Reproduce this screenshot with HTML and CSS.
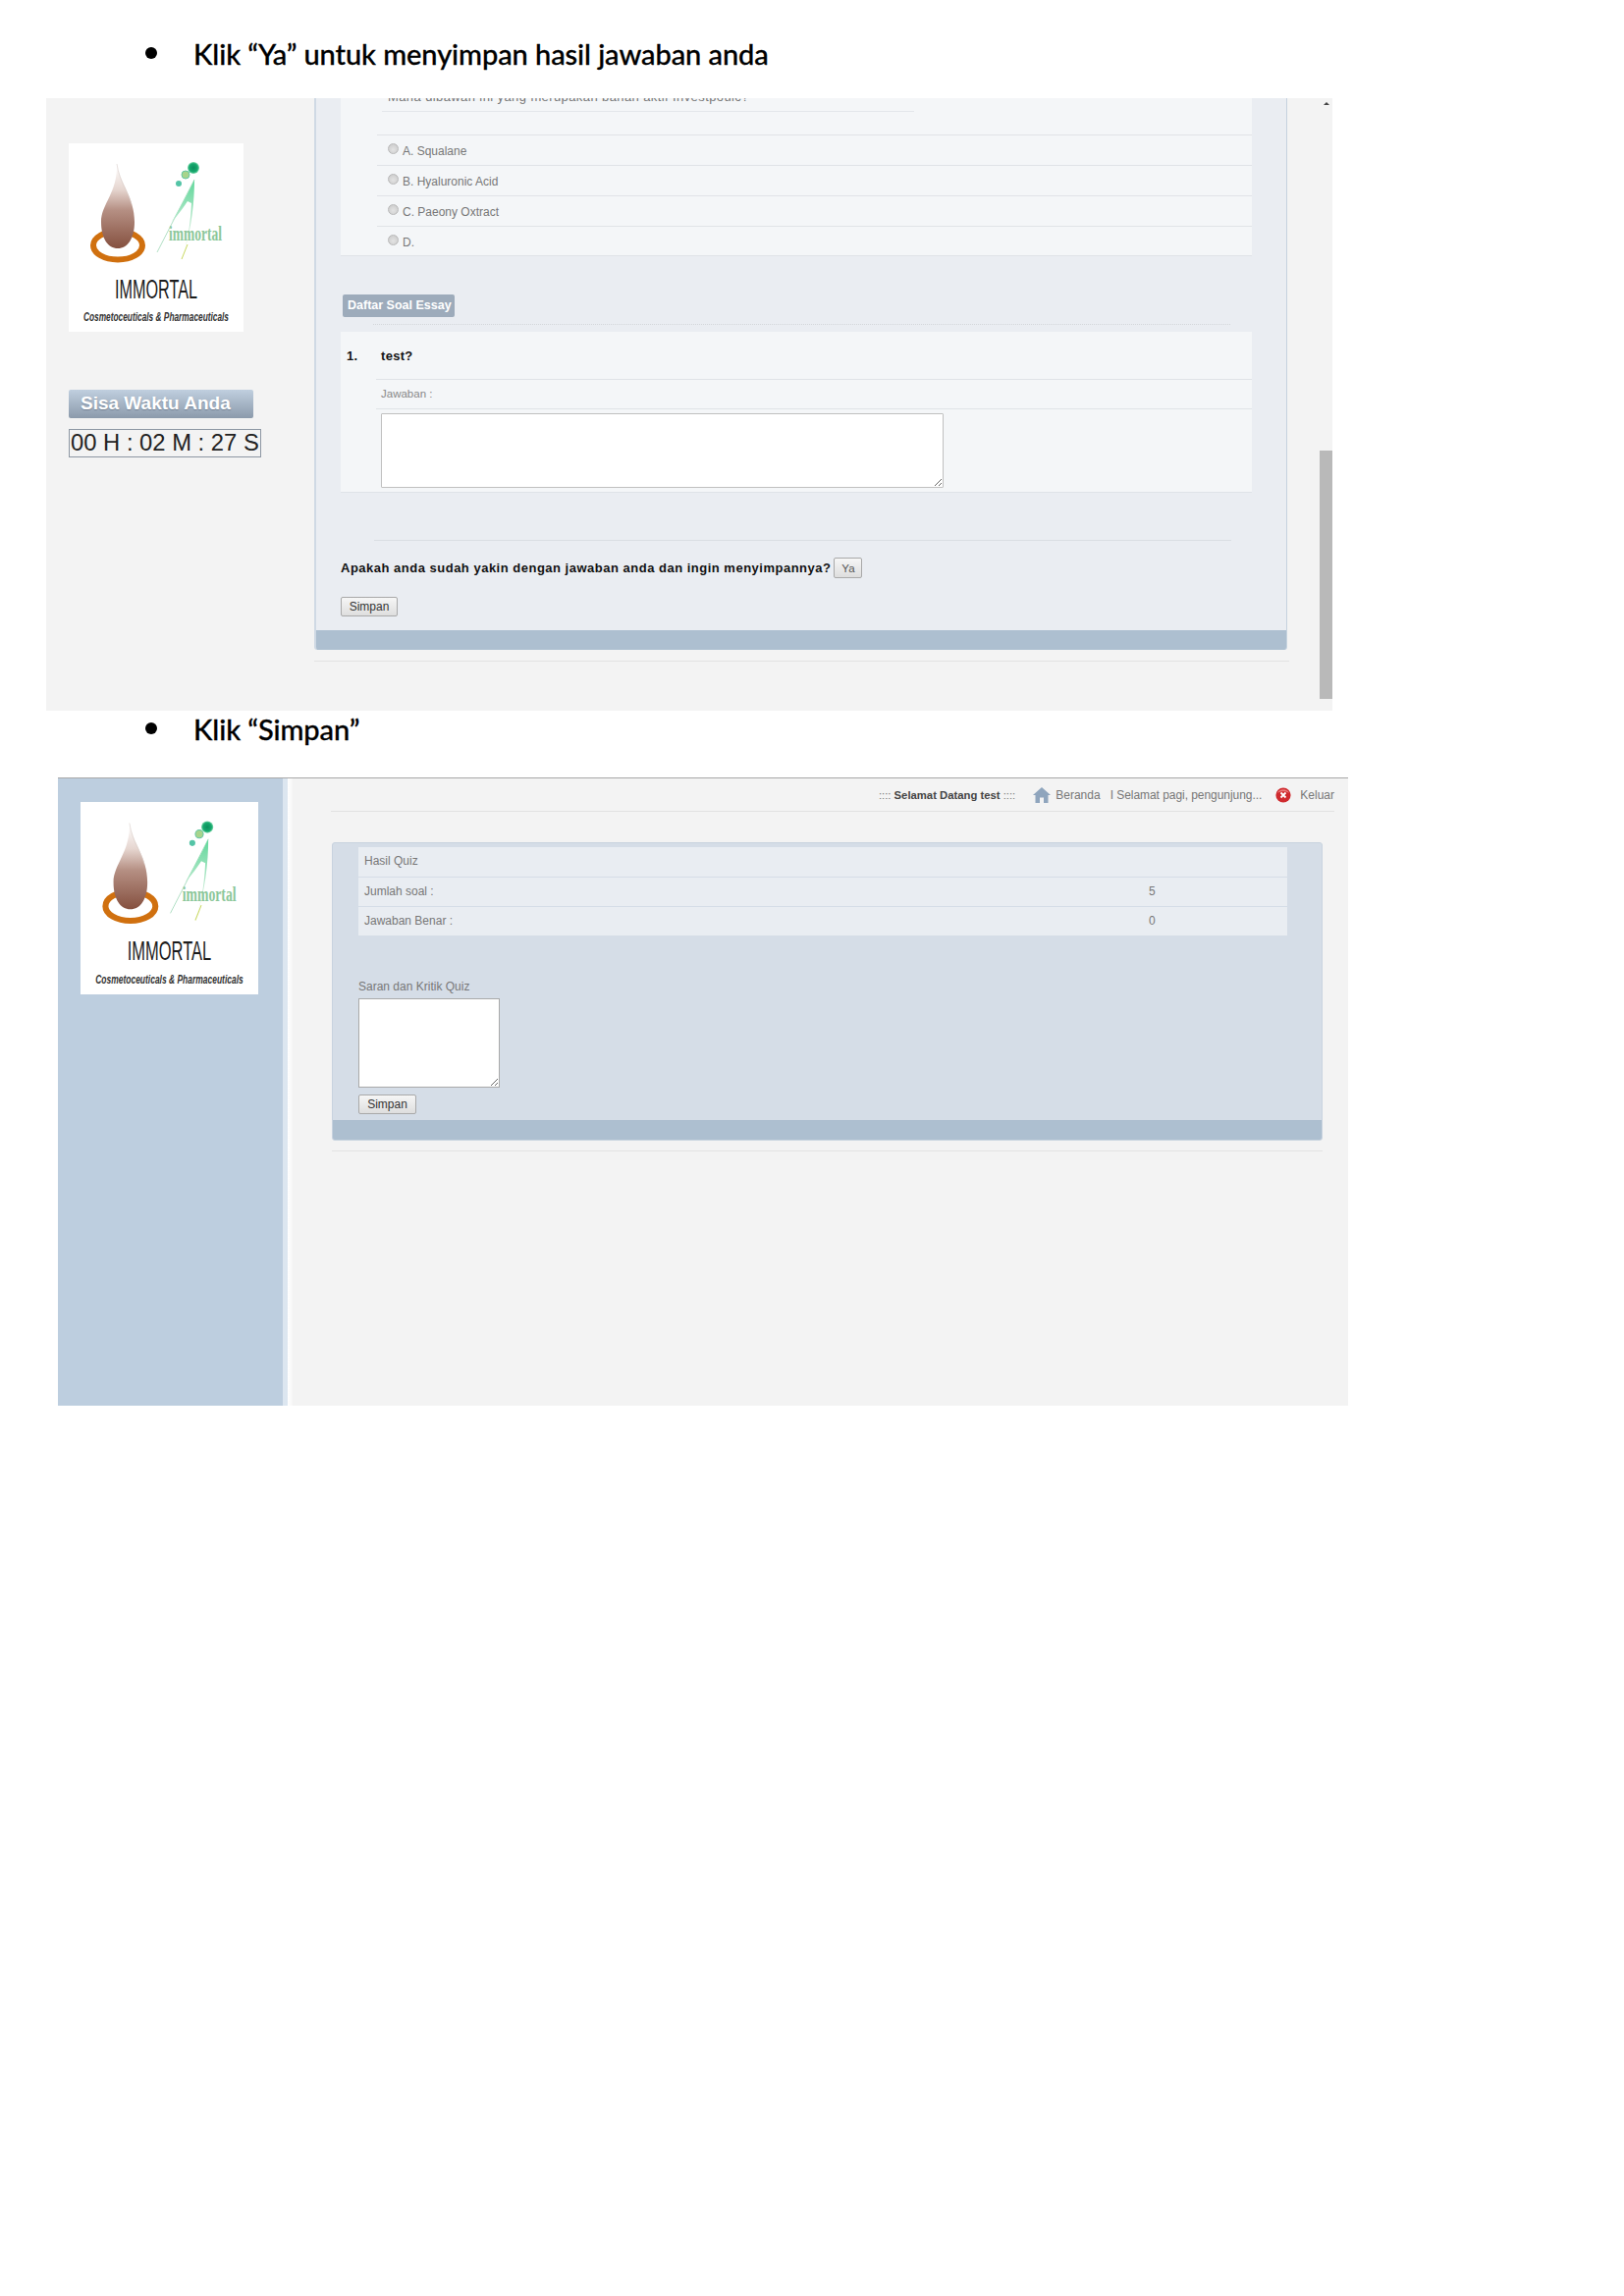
FILE: index.html
```html
<!DOCTYPE html>
<html lang="id">
<head>
<meta charset="utf-8">
<title>Panduan Quiz</title>
<link rel="stylesheet" href="styles.css">
</head>
<body>
<svg class="defs" width="0" height="0" aria-hidden="true">
  <defs>
    <linearGradient id="dropFill" x1="0" y1="0" x2="0" y2="1">
      <stop offset="0" stop-color="#ffffff"/>
      <stop offset="0.3" stop-color="#e6d6d0"/>
      <stop offset="0.55" stop-color="#b58f83"/>
      <stop offset="1" stop-color="#85503f"/>
    </linearGradient>
    <linearGradient id="aFill" x1="0" y1="0" x2="0" y2="1">
      <stop offset="0" stop-color="#5fd79a"/>
      <stop offset="0.6" stop-color="#c4ebd3"/>
      <stop offset="1" stop-color="#d8e6a0"/>
    </linearGradient>
    <radialGradient id="dotFill">
      <stop offset="0" stop-color="#0b8f5c"/>
      <stop offset="0.7" stop-color="#17a96e"/>
      <stop offset="1" stop-color="#7fd9ae"/>
    </radialGradient>
    <symbol id="logo" viewBox="0 0 178 192">
      <rect width="178" height="192" fill="#fff"/>
      <ellipse cx="50" cy="104" rx="25" ry="14.5" fill="none" stroke="#d0700f" stroke-width="6"/>
      <path d="M49 21C52 40 67 55 67 80C67 97 60 107 50 107C40 107 33 97 33 80C33 62 50 50 49 21Z" fill="url(#dropFill)"/>
      <path d="M49 21C52 40 60 48 64 62" fill="none" stroke="#d9cfcb" stroke-width=".6"/>
      <circle cx="127" cy="25" r="6" fill="url(#dotFill)"/>
      <circle cx="119" cy="32" r="4" fill="#a8d48c" stroke="#62c6a4"/>
      <circle cx="112" cy="41" r="3" fill="#54c4a6"/>
      <path d="M128 37L90 111" stroke="#9fd8b8" stroke-width=".8" fill="none"/>
      <path d="M128 37C122 50 113 66 105 80C112 72 117 65 121 59L125 61C124 84 120 105 115 118C125 90 128 60 128 37Z" fill="url(#aFill)"/>
      <path d="M121 103L115 118" stroke="#c8d860" stroke-width="1" fill="none"/>
      <text class="logo-mark" x="102" y="99" textLength="54" lengthAdjust="spacingAndGlyphs">immortal</text>
      <text class="logo-name" x="47" y="158" textLength="84" lengthAdjust="spacingAndGlyphs">IMMORTAL</text>
      <text class="logo-sub" x="15" y="181" textLength="148" lengthAdjust="spacingAndGlyphs">Cosmetoceuticals &amp; Pharmaceuticals</text>
    </symbol>
  </defs>
</svg>

<div class="step step-first">
  <span class="dot"></span>
  <span class="step-text">Klik “Ya” untuk menyimpan hasil jawaban anda</span>
</div>

<section class="shot shot-quiz">
  <aside class="quiz-side">
    <svg class="logo-a" viewBox="0 0 178 192" role="img" aria-label="Immortal"><use href="#logo"/></svg>
    <div class="time-label">Sisa Waktu Anda</div>
    <div class="time-box">00 H : 02 M : 27 S</div>
  </aside>
  <div class="quiz-main">
    <div class="quiz-panel">
      <div class="quiz-body">
        <div class="card card-options">
          <div class="question-clip"><span>Mana dibawah ini yang merupakan bahan aktif Investpoulc?</span></div>
          <ul class="options">
            <li><input type="radio" name="o" class="radio"><span>A. Squalane</span></li>
            <li><input type="radio" name="o" class="radio"><span>B. Hyaluronic Acid</span></li>
            <li><input type="radio" name="o" class="radio"><span>C. Paeony Oxtract</span></li>
            <li><input type="radio" name="o" class="radio"><span>D.</span></li>
          </ul>
        </div>
        <h2 class="badge">Daftar Soal Essay</h2>
        <div class="dotted"></div>
        <div class="card card-essay">
          <div class="essay-q"><span class="essay-no">1.</span><span class="essay-t">test?</span></div>
          <div class="essay-a">Jawaban :</div>
          <textarea class="essay-input"></textarea>
        </div>
        <div class="rule"></div>
        <div class="confirm"><strong>Apakah anda sudah yakin dengan jawaban anda dan ingin menyimpannya?</strong><button class="btn btn-ya">Ya</button></div>
        <button class="btn btn-save">Simpan</button>
      </div>
      <div class="panel-foot"></div>
    </div>
    <div class="below-line below-quiz"></div>
  </div>
  <div class="scrollbar">
    <span class="scroll-arrow"></span>
    <span class="scroll-thumb"></span>
  </div>
</section>

<div class="step step-second">
  <span class="dot"></span>
  <span class="step-text">Klik “Simpan”</span>
</div>

<section class="shot shot-result">
  <aside class="result-side">
    <svg class="logo-b" viewBox="0 0 178 192" preserveAspectRatio="none" role="img" aria-label="Immortal"><use href="#logo"/></svg>
  </aside>
  <div class="result-gap"></div>
  <div class="result-main">
    <header class="topbar">
      <span class="welcome">:::: <b>Selamat Datang test</b> ::::</span>
      <svg class="ico ico-home" viewBox="0 0 18 16" aria-hidden="true"><path d="M9 0L18 8H15.500V16H11V10.500H7V16H2.500V8H0Z" fill="#8fa5bd"/></svg>
      <span class="nav-home">Beranda</span>
      <span class="nav-greet">I Selamat pagi, pengunjung...</span>
      <svg class="ico ico-exit" viewBox="0 0 16 16" aria-hidden="true"><circle cx="8" cy="8" r="7.600" fill="#cf2a2e"/><path d="M2 6A6.500 6 0 0 1 14 6C11 3.800 5 3.800 2 6Z" fill="#ea7a7a"/><path d="M5.500 5.500L10.500 10.500M10.500 5.500L5.500 10.500" stroke="#fff" stroke-width="1.800"/></svg>
      <span class="nav-exit">Keluar</span>
    </header>
    <div class="result-panel">
      <div class="result-body">
        <div class="result-table">
          <div class="result-row"><span>Hasil Quiz</span></div>
          <div class="result-row"><span>Jumlah soal :</span><span class="val">5</span></div>
          <div class="result-row"><span>Jawaban Benar :</span><span class="val">0</span></div>
        </div>
        <label class="saran-label" for="saran">Saran dan Kritik Quiz</label>
        <textarea id="saran" class="saran-input"></textarea>
        <button class="btn btn-save2">Simpan</button>
      </div>
      <div class="panel-foot panel-foot-b"></div>
    </div>
    <div class="below-line below-result"></div>
  </div>
</section>
</body>
</html>
```

FILE: styles.css
```css
* { box-sizing: border-box; }
html, body { margin: 0; padding: 0; background: #fff; }
body { width: 1654px; height: 2339px; font-family: "Liberation Sans", Arial, sans-serif; color: #777; overflow: hidden; }
.defs { display: block; }

/* document headings */
.step { display: flex; align-items: center; padding-left: 148px; height: 40px; }
.step-first { margin-top: 34px; margin-bottom: 26px; }
.step-second { margin-top: -2px; margin-bottom: 30px; }
.dot { width: 12px; height: 12px; border-radius: 50%; background: #000; margin-right: 37px; }
.step-text { font-family: Lato, "Open Sans", sans-serif; font-size: 29px; font-weight: 500; color: #000; letter-spacing: -0.08px; -webkit-text-stroke: 0.3px #000; }

/* shared */
.shot { display: flex; overflow: hidden; background: #f3f3f3; }
.btn { display: block; padding: 0; font-family: "Liberation Sans", Arial, sans-serif; font-size: 12px; color: #333; border: 1px solid #a9a9a9; border-radius: 2px; background: linear-gradient(#f6f6f6, #dedede); }
.panel-foot { margin-top: auto; height: 20px; background: #adbfd0; flex: none; }
.below-line { height: 1px; background: #e2e2e2; }

/* quiz screenshot */
.shot-quiz { margin-left: 47px; width: 1310px; height: 624px; }
.quiz-side { width: 273px; flex: none; padding: 46px 0 0 23px; }
.logo-a { display: block; width: 178px; height: 192px; }
.logo-name { font: 400 27px "Liberation Sans", sans-serif; fill: #1b1b1b; }
.logo-sub { font: italic 700 13px "Liberation Sans", sans-serif; fill: #333; }
.logo-mark { font: 700 21px "Liberation Serif", serif; fill: #8cc79a; }
.time-label { margin-top: 59px; width: 188px; height: 29px; padding-left: 12px; line-height: 28px; font-size: 19px; font-weight: 700; color: #fff; background: linear-gradient(#c0cfdf, #8b9aab); border-radius: 2px; text-shadow: 0 1px 1px rgba(60, 70, 90, .4); white-space: nowrap; }
.time-box { margin-top: 11px; width: 196px; height: 29px; padding-left: 1px; line-height: 25px; font-size: 23.800px; color: #222; border: 1px solid #8d97a3; white-space: nowrap; overflow: hidden; }
.quiz-main { width: 1024px; flex: none; }
.quiz-panel { display: flex; flex-direction: column; width: 991px; height: 562px; background: #eaedf2; border-left: 2px solid #cfd9e4; border-right: 1px solid #c5d2df; border-radius: 0 0 3px 3px; overflow: hidden; }
.quiz-body { padding-left: 25px; }
.card { width: 928px; background: #f4f6f8; border-bottom: 1px solid #dfe3e8; }
.card-options { height: 161px; }
.question-clip { margin-left: 42px; width: 542px; height: 14px; overflow: hidden; border-bottom: 1px solid #e4e7eb; font-size: 13px; letter-spacing: 0.4px; padding-left: 6px; color: #777; }
.question-clip span { display: block; margin-top: -8px; line-height: 14px; white-space: nowrap; }
.options { list-style: none; margin: 23px 0 0 37px; padding: 0; }
.options li { display: flex; align-items: center; height: 31px; padding-left: 11px; border-top: 1px solid #e0e3e7; font-size: 12px; color: #777; }
.options li span { margin-top: 1px; }
.radio { appearance: none; -webkit-appearance: none; width: 11px; height: 11px; margin: -3px 4px 0 0; border-radius: 50%; border: 1px solid #b8b8b8; background: radial-gradient(circle at 50% 60%, #e3e3e3, #c9c9c9); }
.badge { margin: 39px 0 0 2px; width: 114px; height: 23px; line-height: 23px; padding-left: 5px; font-size: 12.500px; font-weight: 700; color: #fff; background: #9dabbb; border-radius: 2px; white-space: nowrap; }
.dotted { margin: 7px 0 0 33px; width: 873px; border-top: 1px dotted #d3d6da; }
.card-essay { height: 164px; margin-top: 7px; }
.essay-q { display: flex; align-items: center; height: 48px; color: #111; font-size: 13px; font-weight: 700; letter-spacing: 0.3px; }
.essay-no { width: 41px; padding-left: 6px; }
.essay-a { height: 31px; margin-left: 36px; padding-left: 5px; line-height: 29px; font-size: 11.500px; color: #888; border-top: 1px solid #e0e3e7; border-bottom: 1px solid #e0e3e7; }
.essay-input { display: block; width: 573px; height: 76px; margin: 4px 0 0 41px; border: 1px solid #c0c0c0; border-radius: 1px; background: #fff; }
.rule { margin: 48px 0 0 34px; width: 873px; height: 1px; background: #dadee3; }
.confirm { display: flex; align-items: center; margin-top: 17px; height: 21px; font-size: 13px; color: #111; letter-spacing: 0.5px; white-space: nowrap; }
.btn-ya { width: 29px; height: 21px; margin-left: 3px; font-size: 11.500px; color: #555; letter-spacing: 0; }
.btn-save { width: 58px; height: 20px; margin-top: 19px; font-size: 12px; }
.below-quiz { margin-top: 11px; width: 993px; }
.scrollbar { width: 13px; flex: none; display: flex; flex-direction: column; align-items: center; }
.scroll-arrow { margin-top: 4px; width: 0; height: 0; border: 3px solid transparent; border-top: 0; border-bottom: 3px solid #444; }
.scroll-thumb { margin-top: 352px; width: 13px; height: 253px; background: #b9b9b9; }

/* result screenshot */
.shot-result { margin-left: 59px; width: 1314px; height: 640px; border-top: 1px solid #a8a8a8; }
.result-side { width: 234px; flex: none; padding: 24px 0 0 23px; background: #bdcedf; border-right: 5px solid #dce6f0; }
.logo-b { display: block; width: 181px; height: 196px; }
.result-gap { width: 5px; flex: none; background: linear-gradient(90deg, #fff, #f6f6f6); }
.result-main { flex: 1; padding-left: 39px; }
.topbar { display: flex; align-items: center; width: 1022px; height: 34px; justify-content: flex-end; font-size: 12px; color: #777; border-bottom: 1px solid #e2e2e2; white-space: nowrap; }
.welcome { font-size: 11.300px; }
.welcome b { color: #444; }
.ico { display: block; flex: none; }
.ico-home { width: 18px; height: 16px; margin-left: 18px; margin-right: 5px; }
.nav-greet { margin-left: 10px; letter-spacing: -0.05px; }
.ico-exit { width: 16px; height: 16px; margin-left: 14px; margin-right: 9px; }
.result-panel { display: flex; flex-direction: column; margin: 31px 0 0 1px; width: 1009px; height: 304px; background: #d5dde7; border: 1px solid #c8d3df; border-radius: 3px; overflow: hidden; }
.result-body { padding: 4px 0 0 26px; }
.result-table { width: 946px; background: #e9edf2; }
.result-row { display: flex; align-items: center; height: 30px; padding: 0 0 2px 6px; font-size: 12px; color: #777; border-top: 1px solid #d5dde7; }
.result-row:first-child { border-top: 0; }
.val { margin-left: auto; width: 141px; }
.saran-label { display: block; margin-top: 45px; height: 14px; line-height: 14px; font-size: 12px; color: #777; }
.saran-input { display: block; width: 144px; height: 91px; margin: 5px 0 0; border: 1px solid #a9a9a9; border-radius: 0; background: #fff; }
.btn-save2 { width: 59px; height: 20px; margin-top: 7px; }
.below-result { margin: 10px 0 0 1px; width: 1009px; }
```
